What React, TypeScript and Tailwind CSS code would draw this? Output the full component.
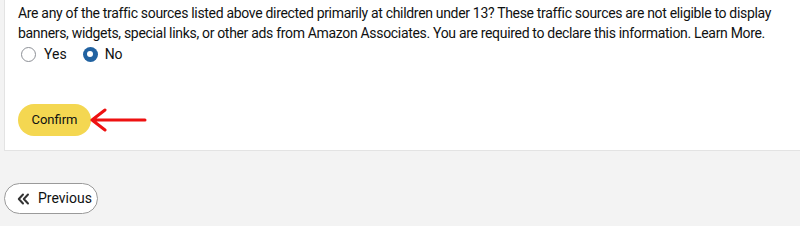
export default function App() {
  return (
    <div
      className="h-[226px] w-[800px] overflow-hidden bg-[#f3f3f3] pl-1 text-[#0f1111]"
      style={{ fontFamily: 'Roboto, "Liberation Sans", Arial, sans-serif' }}
    >
      <section className="-mr-4 border border-t-0 border-[#e3e3e3] bg-white pb-[14px] pl-[13px] pt-[3px]">
        <p className="w-[790px] text-[14px] leading-[20px] tracking-[-0.32px]">
          Are any of the traffic sources listed above directed primarily at children under 13? These traffic sources
          are not eligible to display
          <br />
          banners, widgets, special links, or other ads from Amazon Associates. You are required to declare this
          information. Learn More.
        </p>
        <div className="mt-[1px] flex items-center pl-[3px] text-[14px] leading-[20px]">
          <span className="h-[15px] w-[15px] rounded-full border border-[#8d9096] bg-white" />
          <span className="ml-[8px]">Yes</span>
          <span className="ml-[16px] flex h-[15px] w-[15px] items-center justify-center rounded-full bg-[#2162a1]">
            <span className="h-[6px] w-[6px] rounded-full bg-white" />
          </span>
          <span className="ml-[7px]">No</span>
        </div>
        <div className="mt-[40px] flex items-center">
          <button
            type="button"
            className="h-[32px] w-[73px] rounded-full bg-[#f4d751] text-[13px] text-[#0f1111]"
          >
            Confirm
          </button>
          <svg width="58" height="24" viewBox="0 0 58 24" className="-ml-[1px]">
            <path
              d="M2 12 H55 M2 12 L15 2 M2 12 L15 22"
              stroke="#ee1111"
              strokeWidth="3"
              strokeLinecap="round"
              fill="none"
            />
          </svg>
        </div>
      </section>
      <div className="mt-[32px]">
        <button
          type="button"
          className="flex h-[31px] w-[94px] items-center gap-[8px] rounded-full border border-[#9a9a9a] bg-white pl-[12px] text-[14px]"
        >
          <svg width="13" height="12" viewBox="0 0 13 12">
            <path
              d="M6 1.5 L1.8 6 L6 10.5 M11 1.5 L6.8 6 L11 10.5"
              stroke="#333"
              strokeWidth="2"
              fill="none"
              strokeLinecap="round"
              strokeLinejoin="round"
            />
          </svg>
          Previous
        </button>
      </div>
    </div>
  );
}
